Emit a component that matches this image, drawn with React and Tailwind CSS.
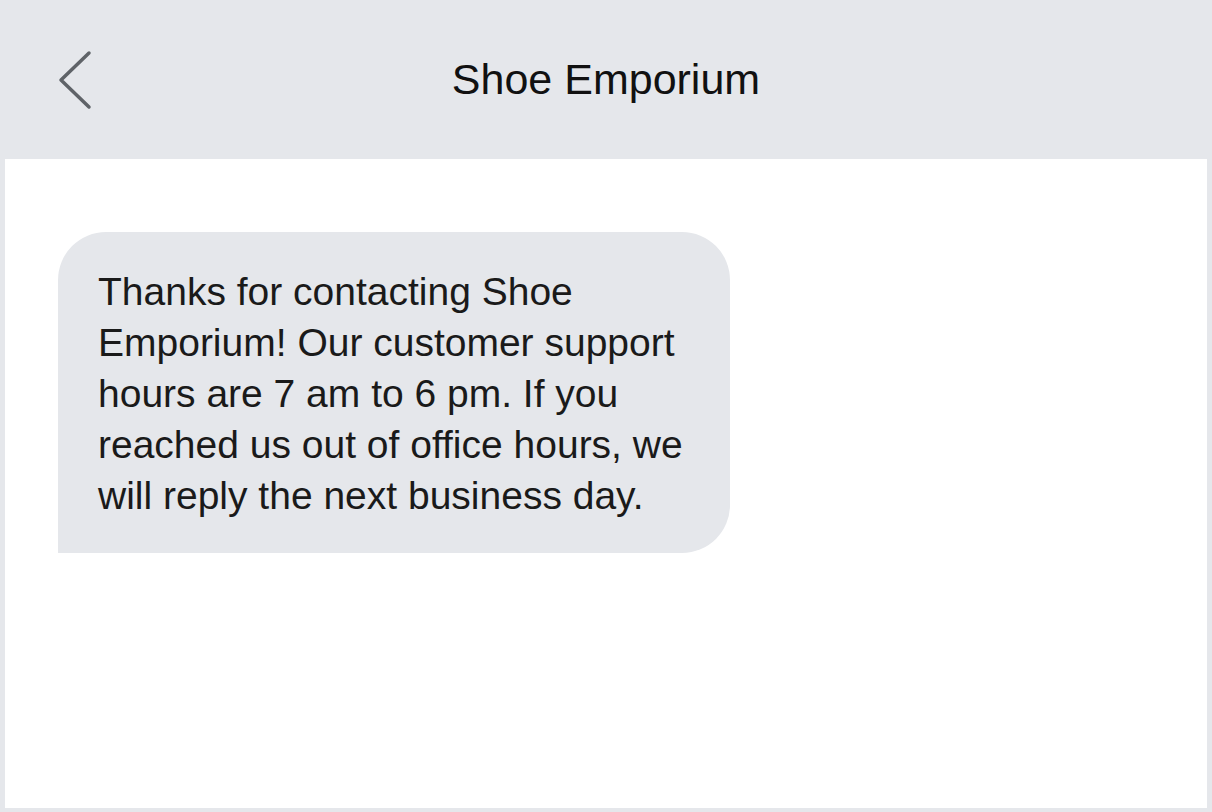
import React from "react";

export default function App() {
  const lines = [
    "Thanks for contacting Shoe",
    "Emporium! Our customer support",
    "hours are 7 am to 6 pm. If you",
    "reached us out of office hours, we",
    "will reply the next business day.",
  ];
  return (
    <div
      className="w-full h-[812px] bg-[#e5e7eb] flex flex-col"
      style={{ fontFamily: '"Liberation Sans", Arial, sans-serif' }}
    >
      <header className="h-[159px] shrink-0 grid grid-cols-[1fr_auto_1fr] items-center">
        <div className="pl-[57px] flex items-center">
          <svg width="36" height="62" viewBox="0 0 36 62" fill="none">
            <path
              d="M32 4 L4 31 L32 58"
              stroke="#5f6368"
              strokeWidth="3.5"
              strokeLinecap="round"
              strokeLinejoin="round"
            />
          </svg>
        </div>
        <h1 className="text-[43px] leading-none text-[#111111] font-normal">
          Shoe Emporium
        </h1>
        <div />
      </header>
      <main className="flex-1 bg-white mx-[5px] mb-[4px] pt-[73px] pl-[53px]">
        <div className="w-[672px] bg-[#e5e7eb] rounded-[48px] rounded-bl-none pl-[40px] pt-[34px] pb-[32px]">
          <p className="text-[39px] leading-[51px] text-[#1a1a1a]">
            {lines.map((l, i) => (
              <span key={i} className="block whitespace-nowrap">
                {l}
              </span>
            ))}
          </p>
        </div>
      </main>
    </div>
  );
}
